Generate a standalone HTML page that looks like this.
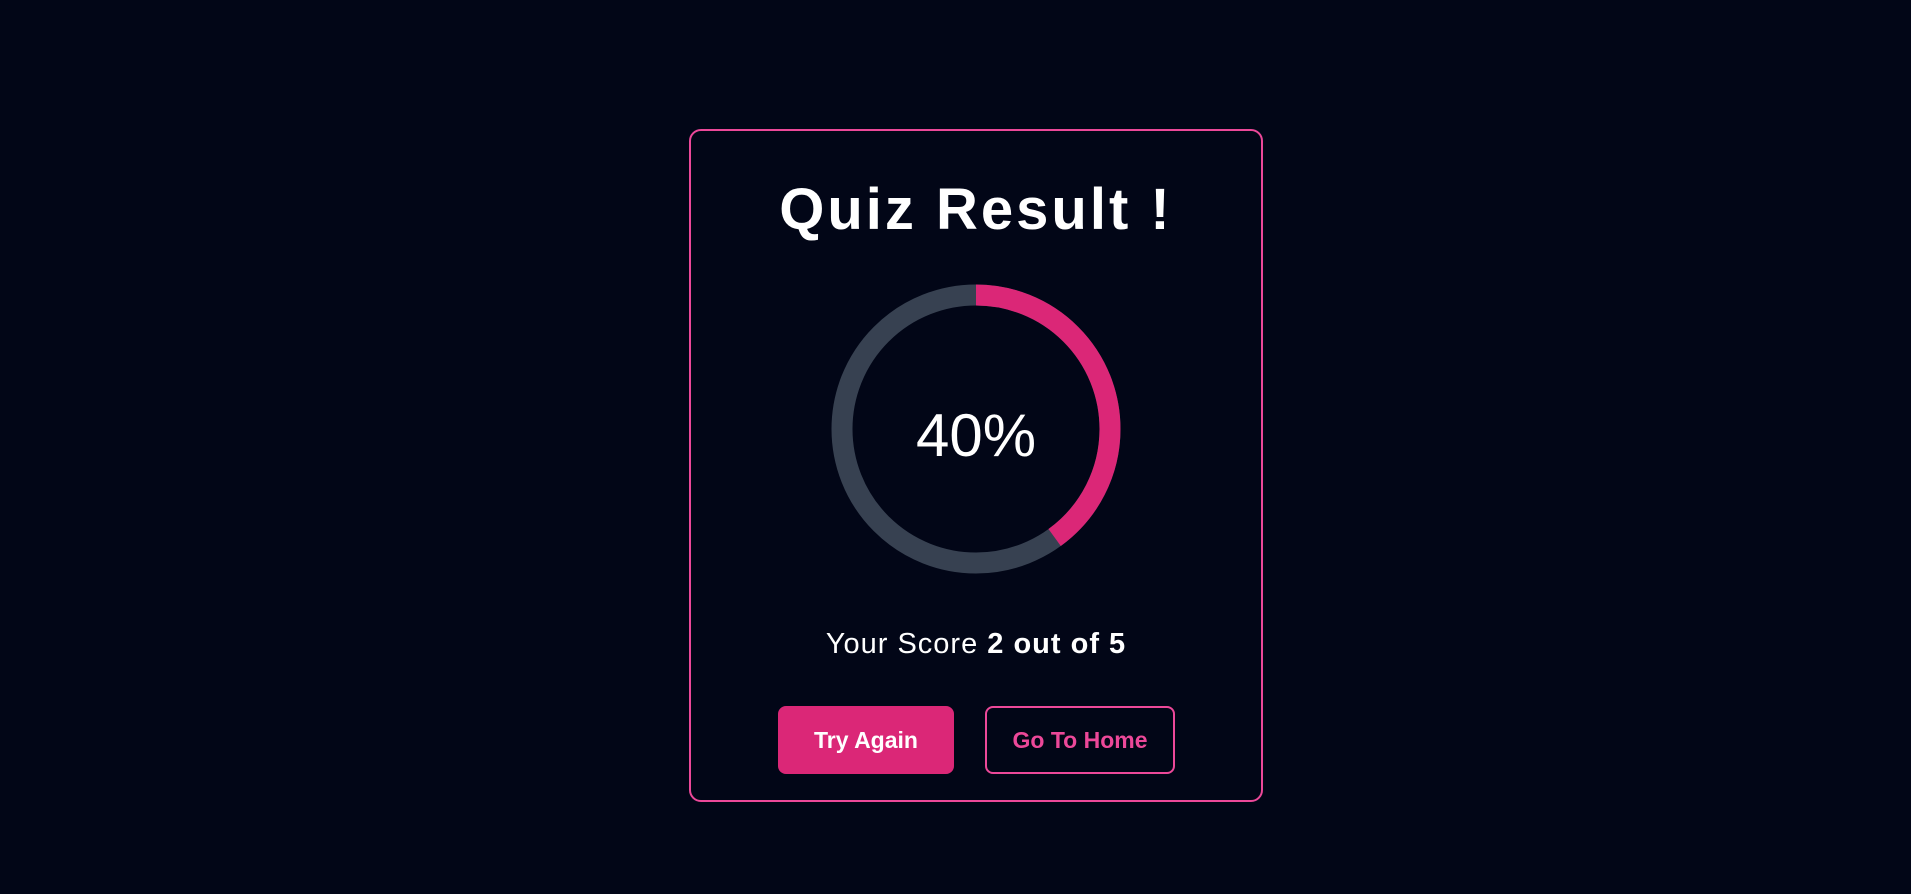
<!DOCTYPE html>
<html><head><meta charset="utf-8"><style>
html,body{margin:0;padding:0;background:#020617;width:1911px;height:894px;overflow:hidden;font-family:"Liberation Sans",sans-serif;color:#fff}
.card{position:absolute;left:689px;top:129px;width:574px;height:673px;border:2px solid #ec4899;border-radius:12px;box-sizing:border-box}
.abs{position:absolute;left:689px;width:574px;text-align:center;white-space:nowrap}
h1{margin:0;position:absolute;left:689px;width:574px;text-align:center;top:182px;font-size:58px;font-weight:bold;line-height:56px;letter-spacing:3px}
.btn{position:absolute;top:706px;height:68px;border-radius:8px;box-sizing:border-box;font-size:23px;font-weight:bold;display:flex;align-items:center;justify-content:center}
</style></head><body>
<div class="card"></div>
<h1>Quiz Result !</h1>
<svg style="position:absolute;left:826px;top:278px" width="300" height="302" viewBox="0 0 300 302">
<circle cx="150" cy="151" r="134" fill="none" stroke="#374151" stroke-width="21"/>
<circle cx="150" cy="151" r="134" fill="none" stroke="#db2777" stroke-width="21" stroke-dasharray="336.8 1000" transform="rotate(-90 150 151)"/>
</svg>
<div class="abs" style="top:396px;font-size:60px;line-height:80px">40%</div>
<div class="abs" style="top:626px;font-size:29px;line-height:36px;letter-spacing:1px">Your Score <b>2 out of 5</b></div>
<div class="btn" style="left:778px;width:176px;background:#db2777;color:#fff">Try Again</div>
<div class="btn" style="left:985px;width:190px;border:2px solid #ec4899;color:#ec4899">Go To Home</div>
</body></html>
